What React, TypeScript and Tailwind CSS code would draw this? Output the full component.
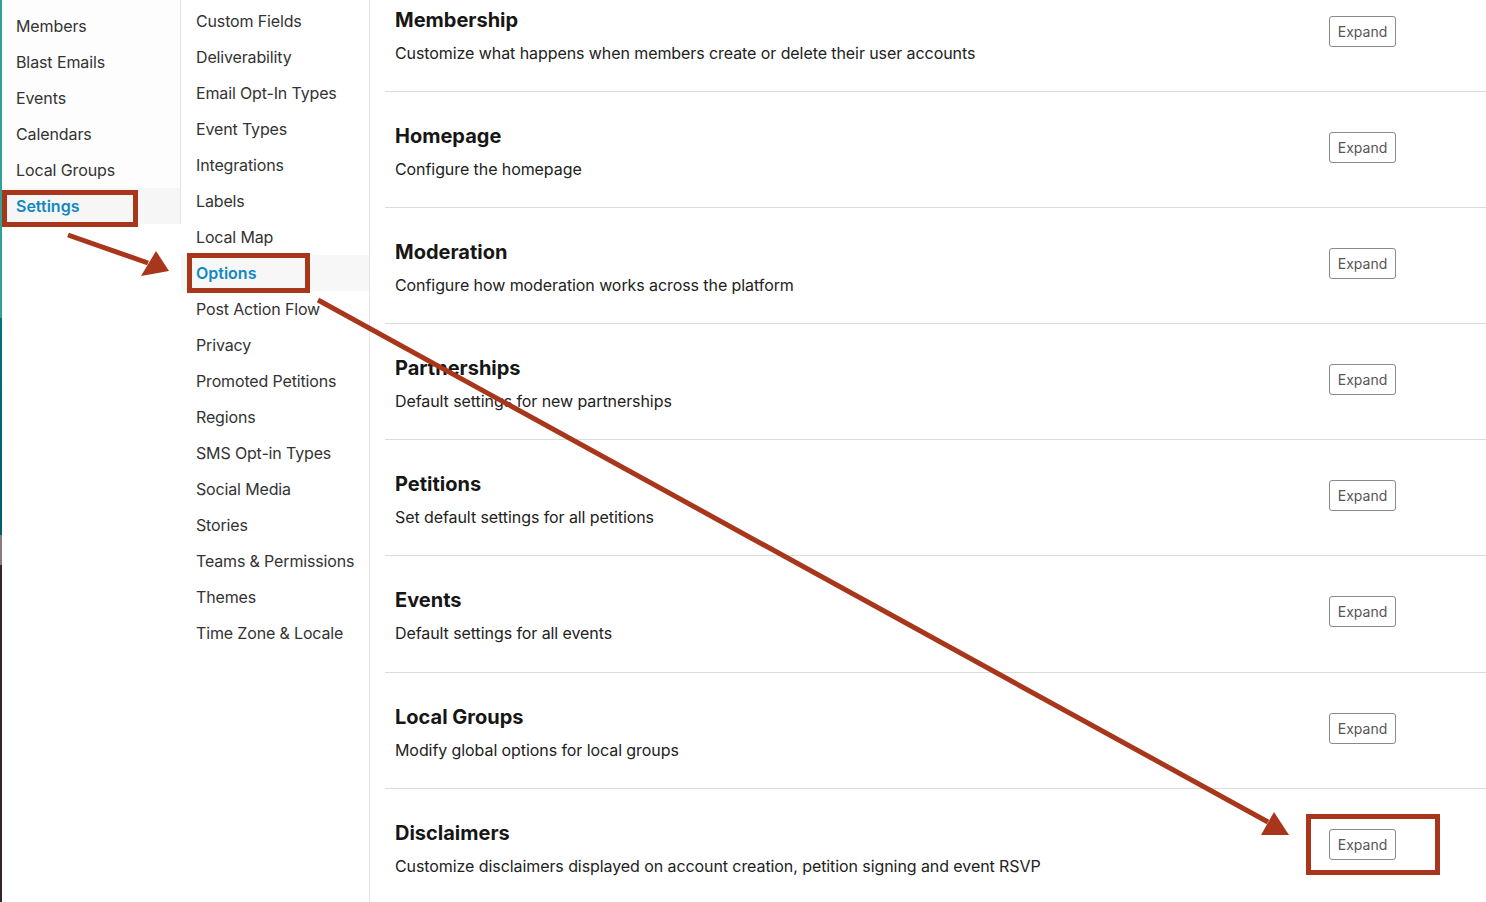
import React from 'react';

const primaryNav = ['Members', 'Blast Emails', 'Events', 'Calendars', 'Local Groups', 'Settings'];

const settingsNav = [
    'Custom Fields',
    'Deliverability',
    'Email Opt-In Types',
    'Event Types',
    'Integrations',
    'Labels',
    'Local Map',
    'Options',
    'Post Action Flow',
    'Privacy',
    'Promoted Petitions',
    'Regions',
    'SMS Opt-in Types',
    'Social Media',
    'Stories',
    'Teams & Permissions',
    'Themes',
    'Time Zone & Locale',
];

const sections = [
    { title: 'Membership', description: 'Customize what happens when members create or delete their user accounts' },
    { title: 'Homepage', description: 'Configure the homepage' },
    { title: 'Moderation', description: 'Configure how moderation works across the platform' },
    { title: 'Partnerships', description: 'Default settings for new partnerships' },
    { title: 'Petitions', description: 'Set default settings for all petitions' },
    { title: 'Events', description: 'Default settings for all events' },
    { title: 'Local Groups', description: 'Modify global options for local groups' },
    {
        title: 'Disclaimers',
        description: 'Customize disclaimers displayed on account creation, petition signing and event RSVP',
    },
];

const ANNOTATION = '#a8361b';

const Annotations: React.FC = () => (
    <>
        <div className="pointer-events-none absolute left-[2px] top-[190px] h-[37px] w-[136px] border-[5px] border-[#a8361b]" />
        <div className="pointer-events-none absolute left-[187px] top-[253px] h-[40px] w-[123px] border-[5px] border-[#a8361b]" />
        <div className="pointer-events-none absolute left-[1306px] top-[814px] h-[61px] w-[134px] border-[5px] border-[#a8361b]" />
        <svg className="pointer-events-none absolute left-0 top-0" width="1486" height="902" viewBox="0 0 1486 902">
            <line x1="68" y1="235" x2="148" y2="263" stroke={ANNOTATION} strokeWidth="5" />
            <polygon points="169,271 141,276 156,251" fill={ANNOTATION} />
            <line x1="318" y1="300" x2="1268" y2="822" stroke={ANNOTATION} strokeWidth="5" />
            <polygon points="1289,835 1261,835 1274,812" fill={ANNOTATION} />
        </svg>
    </>
);

export default function App() {
    return (
        <div className="relative flex h-[902px] w-[1486px] overflow-hidden bg-white font-['Inter',sans-serif] text-[#333]">
            <div className="w-[2px] shrink-0 bg-[linear-gradient(to_bottom,#30a395_0,#30a395_318px,#00737c_318px,#005d6e_535px,#8b7b7b_535px,#8b7b7b_565px,#33252d_565px,#33252d_902px)]" />

            <nav className="h-[224px] w-[179px] shrink-0 border-r border-[#e4e4e4] bg-[#fdfdfd] pt-[8px]">
                {primaryNav.map((item) => (
                    <div
                        key={item}
                        className={
                            item === 'Settings'
                                ? 'flex h-[36px] items-center whitespace-nowrap bg-[#f6f6f6] px-[14px] text-[16px] font-semibold text-[#1188c0]'
                                : 'flex h-[36px] items-center whitespace-nowrap px-[14px] text-[16px] tracking-[-0.1px] text-[#333]'
                        }
                    >
                        {item}
                    </div>
                ))}
            </nav>

            <nav className="w-[189px] shrink-0 border-r border-[#e4e4e4] bg-white pt-[3px]">
                {settingsNav.map((item) => (
                    <div
                        key={item}
                        className={
                            item === 'Options'
                                ? 'flex h-[36px] items-center whitespace-nowrap bg-[#f7f7f7] px-[15px] text-[16px] font-semibold text-[#1188c0]'
                                : 'flex h-[36px] items-center whitespace-nowrap px-[15px] text-[16px] tracking-[-0.15px] text-[#333]'
                        }
                    >
                        {item}
                    </div>
                ))}
            </nav>

            <main className="min-w-0 flex-1 pl-[15px]">
                <div className="-mt-[24.3px]">
                    {sections.map((section) => (
                        <section
                            key={section.title}
                            className="flex h-[116.17px] items-start border-b border-[#dcdcdc] pl-[10px] pr-[90px] pt-[30px]"
                        >
                            <div className="min-w-0 flex-1">
                                <h2 className="text-[20px] font-bold leading-[28px] text-[#161616]">{section.title}</h2>
                                <p className="mt-[7px] text-[16px] leading-[24px] tracking-[-0.08px] text-[#222]">
                                    {section.description}
                                </p>
                            </div>
                            <button
                                type="button"
                                className="mt-[10px] h-[31px] w-[67px] rounded-[3px] border border-[#8a8a8a] bg-white text-[14px] text-[#555]"
                            >
                                Expand
                            </button>
                        </section>
                    ))}
                </div>
            </main>

            <Annotations />
        </div>
    );
}
